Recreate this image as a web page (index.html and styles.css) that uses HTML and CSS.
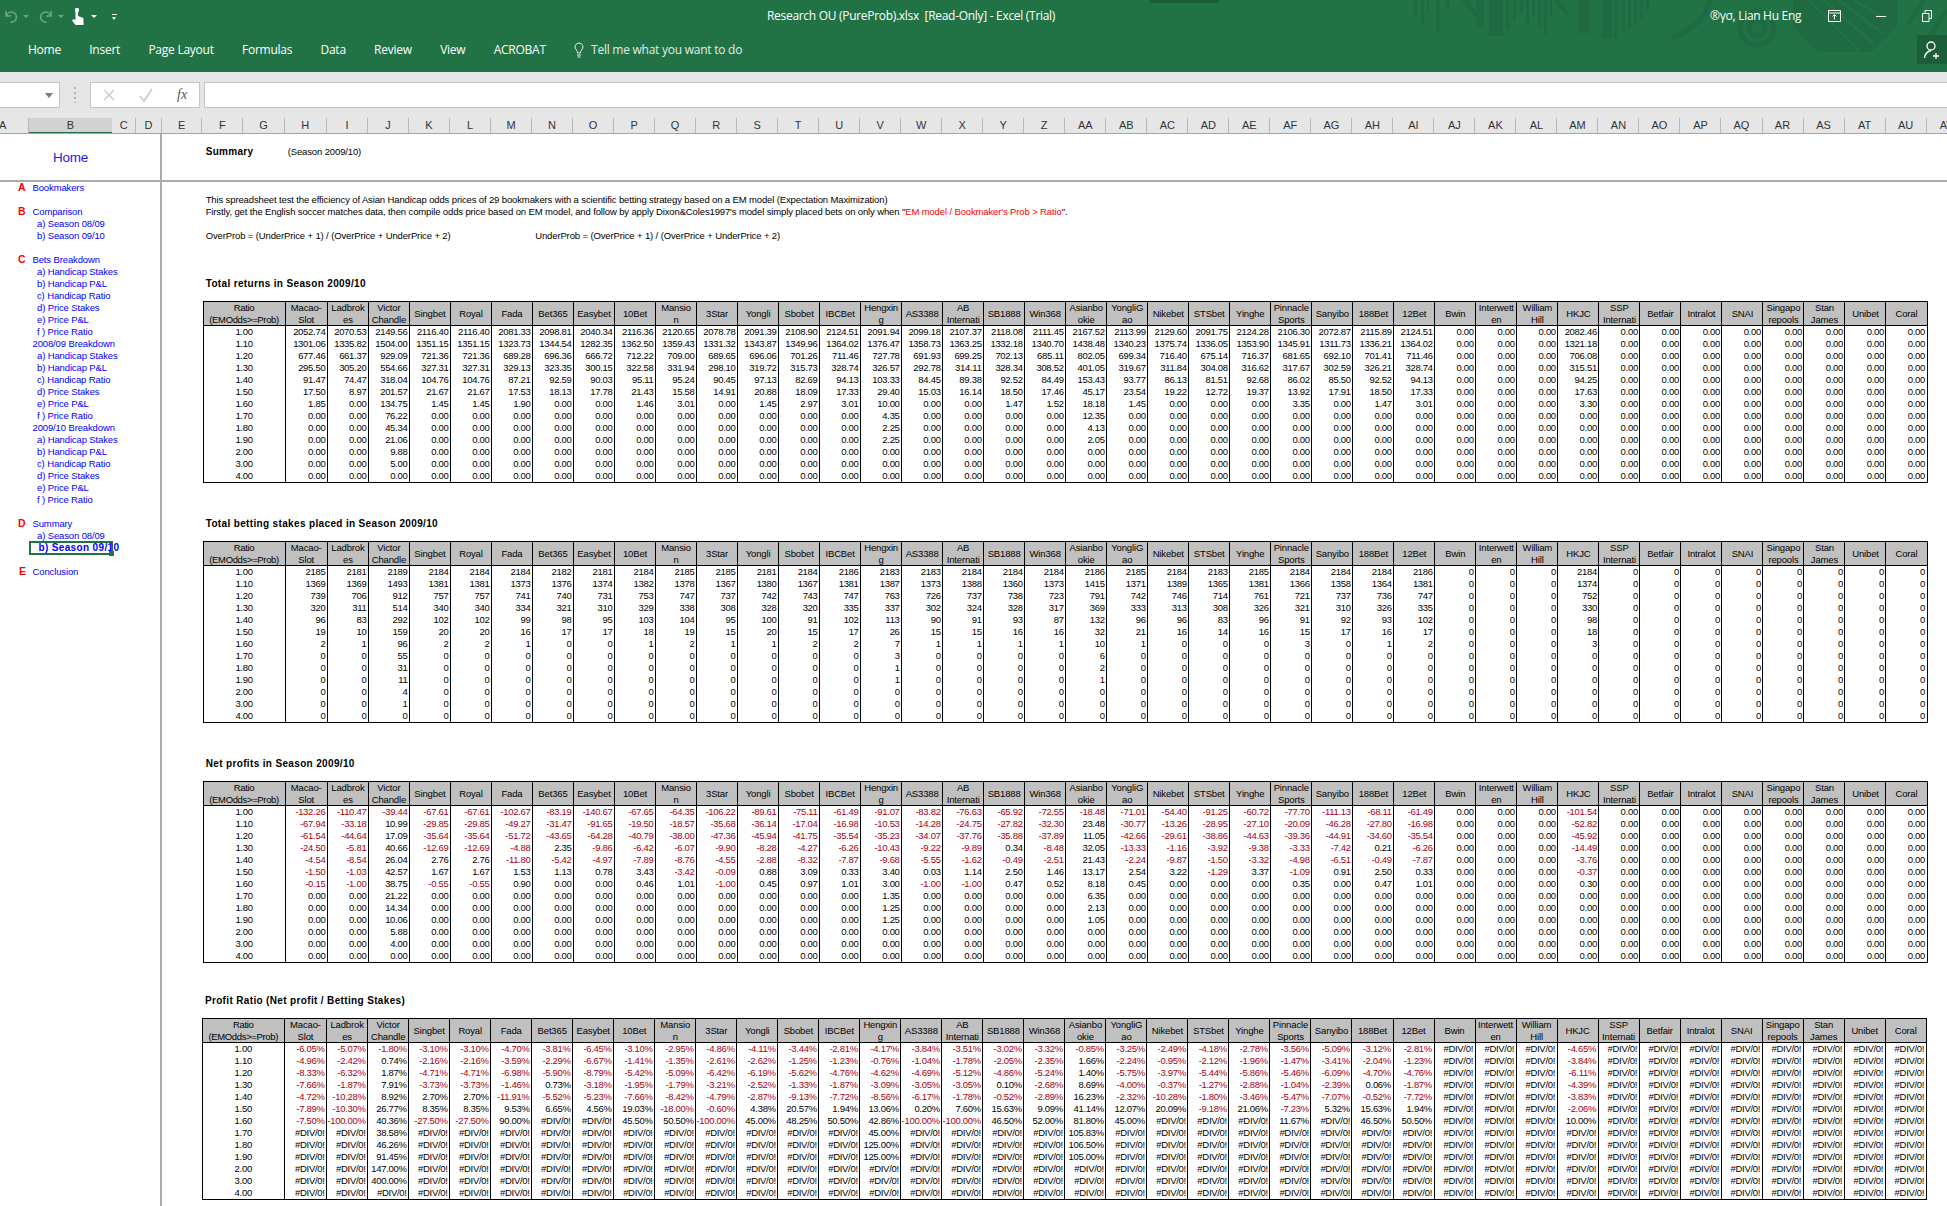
FILE: index.html
```html
<!DOCTYPE html>
<html lang="en">
<head>
<meta charset="utf-8">
<title>Research OU (PureProb).xlsx [Read-Only] - Excel (Trial)</title>
<link rel="stylesheet" href="styles.css">
</head>
<body>
<div class="app">
  <header class="chrome">
    <span class="title-tab"></span>
    <svg class="deco" viewBox="0 0 533 72" width="533" height="72" aria-hidden="true">
      <g class="deco-fill">
        <rect x="0" y="0" width="3" height="16"/><rect x="7" y="0" width="3" height="24"/><rect x="13" y="0" width="2" height="12"/><rect x="22" y="0" width="4" height="32"/>
        <rect x="32" y="0" width="3" height="10"/><rect x="62" y="0" width="8" height="28"/><rect x="75" y="0" width="14" height="36"/>
        <rect x="92" y="0" width="3" height="30"/><rect x="99" y="0" width="3" height="20"/><rect x="106" y="0" width="3" height="14"/><rect x="112" y="0" width="3" height="24"/>
        <rect x="118" y="0" width="3" height="16"/><rect x="124" y="0" width="3" height="26"/><rect x="130" y="0" width="3" height="34"/><rect x="136" y="0" width="2" height="18"/>
        <rect x="164" y="0" width="12" height="33"/><rect x="188" y="0" width="10" height="38"/><rect x="200" y="0" width="4" height="38"/><rect x="208" y="0" width="3" height="32"/>
        <rect x="214" y="0" width="3" height="28"/><rect x="220" y="0" width="3" height="24"/><rect x="226" y="0" width="3" height="18"/><rect x="232" y="0" width="3" height="12"/>
        <path d="M47 0 l15 18 v-6 l-8 -12z"/><path d="M140 0 l12 16 l3 -2 l-10 -14z"/>
        <path d="M379 0h104v26l-26 26h-52l-26-26z"/>
      </g>
      <g class="deco-cut">
        <path d="M395 0l50 50M410 0l50 44M425 0l44 34M440 0l30 18" />
      </g>
      <g class="deco-ring">
        <circle cx="343" cy="28" r="17"/><circle cx="343" cy="28" r="8"/>
        <path d="M296 0c-4 18-18 30-38 38"/>
        <path d="M510 0l-16 24M533 10l-20 30"/>
      </g>
    </svg>
    <div class="title-row">
      <div class="qat">
        <svg class="qat-icon faded" width="16" height="16" viewBox="0 0 16 16"><path d="M3 3v5h5M3.5 8a5 5 0 1 1 4 6" fill="none" stroke="#fff" stroke-width="1.6"/></svg>
        <span class="caret faded"></span>
        <svg class="qat-icon faded redo" width="16" height="16" viewBox="0 0 16 16"><path d="M13 3v5H8M12.5 8a5 5 0 1 0-4 6" fill="none" stroke="#fff" stroke-width="1.6"/></svg>
        <span class="caret faded"></span>
        <svg class="qat-icon hand" width="13" height="17" viewBox="0 0 13 17"><path d="M4 1a2.4 2.4 0 0 1 4 0v1.500a2.800 2.800 0 0 1-1 2V8l4 1.500c1 .4 1.500 1 1.500 2V17H4.500L1 12.500 2.500 11l2 1V4.500A2.800 2.800 0 0 1 4 2.500z" fill="#fff"/></svg>
        <span class="caret white"></span>
        <span class="customize"></span>
      </div>
      <div class="doc-title">Research OU (PureProb).xlsx&nbsp; [Read-Only] - Excel (Trial)</div>
      <div class="window">
        <span class="account">®γσ, Lian Hu Eng</span>
        <svg class="win-ribbon" width="13" height="12" viewBox="0 0 13 12"><path d="M.5.500h12v11H.500zM.5 3h12M6.500 9.500V5M4.500 6.500l2-2 2 2" fill="none" stroke="#fff"/></svg>
        <span class="win-min"></span>
        <svg class="win-max" width="10" height="12" viewBox="0 0 10 12"><path d="M.5 3.500h6.500v8H.500zM3 3.500V.5h6.500v8H7" fill="none" stroke="#fff"/></svg>
      </div>
    </div>
    <div class="tab-row">
      <nav class="tabs">
        <span>Home</span><span>Insert</span><span>Page Layout</span><span>Formulas</span><span>Data</span><span>Review</span><span>View</span><span>ACROBAT</span>
        <span class="tell">
          <svg width="10" height="16" viewBox="0 0 10 16"><path d="M5 1a4 4 0 0 0-2.500 7.100C3.300 9 3.500 10 3.500 11h3c0-1 .2-2 1-2.900A4 4 0 0 0 5 1zM3 13h4M3.500 15h3" fill="none" stroke="#e8f0ea"/></svg>
          Tell me what you want to do
        </span>
      </nav>
      <div class="share">
        <svg width="18" height="20" viewBox="0 0 18 20"><circle cx="8" cy="6" r="4" fill="none" stroke="#fff" stroke-width="1.300"/><path d="M1.500 18c.5-4 2.500-6.500 6.500-7.500M10 16h6M13 13v6" fill="none" stroke="#fff" stroke-width="1.300"/></svg>
      </div>
    </div>
  </header>

  <section class="formula-bar">
    <div class="name-box"><span class="name-caret"></span></div>
    <span class="grip"></span>
    <div class="fx-box">
      <svg width="12" height="12" viewBox="0 0 12 12"><path d="M1 1l10 10M11 1L1 11" stroke="#c8c8c8" stroke-width="1.300" fill="none"/></svg>
      <svg width="14" height="14" viewBox="0 0 14 14"><path d="M1 8l4 5L13 1" stroke="#c8c8c8" stroke-width="1.600" fill="none"/></svg>
      <span class="fx">fx</span>
    </div>
    <div class="formula-input"></div>
  </section>

  <div class="col-heads" id="colHeads"></div>

  <main class="sheet">
    <div class="home-cell"><a class="home-link">Home</a></div>
    <div class="page-head"><strong class="page-title">Summary</strong><span>(Season 2009/10)</span></div>

    <nav class="index">
      <div class="ix head"><b>A</b>Bookmakers</div>
      <div class="ix gap"></div>
      <div class="ix head"><b>B</b>Comparison</div>
      <div class="ix sub">a) Season 08/09</div>
      <div class="ix sub">b) Season 09/10</div>
      <div class="ix gap"></div>
      <div class="ix head"><b>C</b>Bets Breakdown</div>
      <div class="ix sub">a) Handicap Stakes</div>
      <div class="ix sub">b) Handicap P&amp;L</div>
      <div class="ix sub">c) Handicap Ratio</div>
      <div class="ix sub">d) Price Stakes</div>
      <div class="ix sub">e) Price P&amp;L</div>
      <div class="ix sub">f ) Price Ratio</div>
      <div class="ix group">2008/09 Breakdown</div>
      <div class="ix sub">a) Handicap Stakes</div>
      <div class="ix sub">b) Handicap P&amp;L</div>
      <div class="ix sub">c) Handicap Ratio</div>
      <div class="ix sub">d) Price Stakes</div>
      <div class="ix sub">e) Price P&amp;L</div>
      <div class="ix sub">f ) Price Ratio</div>
      <div class="ix group">2009/10 Breakdown</div>
      <div class="ix sub">a) Handicap Stakes</div>
      <div class="ix sub">b) Handicap P&amp;L</div>
      <div class="ix sub">c) Handicap Ratio</div>
      <div class="ix sub">d) Price Stakes</div>
      <div class="ix sub">e) Price P&amp;L</div>
      <div class="ix sub">f ) Price Ratio</div>
      <div class="ix gap"></div>
      <div class="ix head"><b>D</b>Summary</div>
      <div class="ix sub">a) Season 08/09</div>
      <div class="ix current">b) Season 09/10<i class="sel-box"></i><i class="sel-handle"></i></div>
      <div class="ix gap"></div>
      <div class="ix head"><b class="e">E</b>Conclusion</div>
    </nav>

    <div class="content">
      <div class="note first">This spreadsheet test the efficiency of Asian Handicap odds prices of 29 bookmakers with a scientific betting strategy based on a EM model (Expectation Maximization)</div>
      <div class="note">Firstly, get the English soccer matches data, then compile odds price based on EM model, and follow by apply Dixon&amp;Coles1997's model simply placed bets on only when "<span class="alert">EM model / Bookmaker's Prob &gt; Ratio</span>".</div>
      <div class="note formula"><span class="over">OverProb = (UnderPrice + 1) / (OverPrice + UnderPrice + 2)</span><span>UnderProb = (OverPrice + 1) / (OverPrice + UnderPrice + 2)</span></div>
      <section class="block b1"><h2>Total returns in Season 2009/10</h2><div class="grid" id="returns"></div></section>
      <section class="block"><h2>Total betting stakes placed in Season 2009/10</h2><div class="grid" id="stakes"></div></section>
      <section class="block"><h2>Net profits in Season 2009/10</h2><div class="grid" id="profits"></div></section>
      <section class="block last"><h2>Profit Ratio (Net profit / Betting Stakes)</h2><div class="grid" id="ratios"></div></section>
    </div>
  </main>
</div>
<script src="app.js"></script>
</body>
</html>
```
FILE: styles.css
```css
* { box-sizing: border-box; }
html, body { margin: 0; height: 100%; overflow: hidden; background: #fff; }
body { font-family: "Liberation Sans", Arial, sans-serif; color: #000; }
.app { width: 1947px; height: 1206px; display: flex; flex-direction: column; overflow: hidden; }

/* Window chrome */
.chrome { position: relative; height: 72px; background: #217346; color: #fff; font-family: "Open Sans", sans-serif; font-size: 12px; overflow: hidden; }
.title-tab { position: absolute; left: 1150px; top: 0; width: 69px; height: 3px; background: #1a5c38; }
.deco { position: absolute; left: 1414px; top: 0; }
.deco-fill { fill: #1f6a41; }
.deco-cut { fill: none; stroke: #217346; stroke-width: 3; }
.deco-ring { fill: none; stroke: #1f6a41; stroke-width: 5; }
.title-row { position: relative; height: 35px; display: flex; align-items: flex-start; padding-top: 7px; }
.qat { width: 767px; display: flex; align-items: center; height: 18px; padding-left: 3px; }
.qat-icon { flex: none; }
.faded { opacity: .35; }
.caret { width: 0; height: 0; border: 3px solid transparent; border-top: 3px solid #fff; border-bottom: 0; margin: 0 0 0 4px; }
.redo { margin-left: 9px; }
.hand { margin-left: 7px; }
.caret.white { margin-left: 7px; }
.customize { width: 5px; height: 5px; margin-left: 15px; border-top: 1px solid #fff; position: relative; }
.customize::after { content: ""; position: absolute; left: 0; top: 2px; border: 2.5px solid transparent; border-top: 3px solid #fff; border-bottom: 0; }
.doc-title { flex: 1; line-height: 18px; font-size: 12px; letter-spacing: -.3px; white-space: nowrap; }
.window { display: flex; align-items: center; height: 18px; }
.account { position: absolute; left: 1710px; top: 7px; line-height: 18px; letter-spacing: -.3px; white-space: nowrap; }
.win-ribbon { position: absolute; left: 1828px; top: 10px; }
.win-min { position: absolute; left: 1876px; top: 16px; width: 10px; height: 1px; background: #fff; }
.win-max { position: absolute; left: 1922px; top: 10px; }
.tab-row { position: relative; height: 37px; display: flex; justify-content: space-between; }
.tabs { display: flex; gap: 28.300px; padding-left: 28px; line-height: 30px; height: 30px; letter-spacing: -.25px; }
.tell { display: inline-flex; align-items: center; gap: 7px; color: #e2ece6; }
.share { width: 30px; height: 29px; background: #1b5e39; display: flex; align-items: center; justify-content: center; }

/* Formula bar */
.formula-bar { height: 46px; background: #e6e6e6; display: flex; align-items: flex-start; padding-top: 10px; }
.name-box { position: relative; width: 60px; height: 26px; background: #fff; border: 1px solid #c6c6c6; border-left: 0; }
.name-caret { position: absolute; left: 45px; top: 10px; border: 4px solid transparent; border-top: 5px solid #7a7a7a; border-bottom: 0; }
.grip { width: 2px; height: 16px; margin: 5px 14px 0 14px; background: repeating-linear-gradient(#b0b0b0 0 2px, transparent 2px 5px); }
.fx-box { width: 110px; height: 26px; background: #fff; border: 1px solid #c6c6c6; display: flex; align-items: center; padding-left: 12px; gap: 24px; }
.fx { font-family: "Liberation Serif", serif; font-style: italic; font-size: 14px; color: #555; }
.formula-input { flex: 1; height: 26px; margin-left: 4px; background: #fff; border: 1px solid #c6c6c6; border-right: 0; }

/* Column headers */
.col-heads { height: 16px; background: #e6e6e6; display: grid; grid-template-columns: 29px 83px 24.4px 25.400px 40.700px 41px 41.200px 42.300px repeat(40, 41.020px); border-bottom: 1px solid #a6a6a6; overflow: hidden; }
.col-heads span { font-size: 11px; line-height: 15px; text-align: center; color: #333; border-right: 1px solid #b8b8b8; overflow: hidden; white-space: nowrap; }
.col-heads .active { background: #d2d2d2; border-bottom: 2px solid #217346; height: 16px; border-right: 0; }
.col-heads .cut { text-align: left; text-indent: -1px; }

/* Sheet */
.sheet { flex: 1; min-height: 0; display: grid; grid-template-columns: 162px 1fr; grid-template-rows: 48px 1fr; font-size: 9.500px; letter-spacing: -.13px; }
.home-cell { border-right: 2px solid #ababab; border-bottom: 2px solid #ababab; padding: 15px 0 0 29px; width: 162px; }
.home-link { display: block; width: 83px; text-align: center; color: #2a12e6; font-size: 13.500px; letter-spacing: -.2px; line-height: 18px; }
.page-head { border-bottom: 2px solid #ababab; padding: 12px 0 0 43.700px; line-height: 12px; white-space: nowrap; }
.page-title { display: inline-block; width: 82px; font-size: 10px; letter-spacing: .3px; }
.index { border-right: 2px solid #ababab; color: #00f; }
.ix { height: 12px; line-height: 11px; white-space: nowrap; position: relative; }
.ix.head { padding-left: 18px; }
.ix.head b { display: inline-block; width: 14.500px; color: #f00; font-size: 10.500px; font-weight: 700; }
.ix.head b.e { padding-left: 1px; }
.ix.group { padding-left: 32.500px; }
.ix.sub { padding-left: 37px; }
.ix.current { padding-left: 38.500px; font-size: 10px; font-weight: 700; letter-spacing: .35px; }
.sel-box { position: absolute; left: 28.500px; top: -1px; width: 84px; height: 14px; border: 2px solid #217346; pointer-events: none; }
.sel-handle { position: absolute; left: 109px; top: 9px; width: 5px; height: 5px; background: #217346; }
.content { padding: 12px 0 0 40.500px; min-width: 0; overflow: hidden; }
.content .note { margin-left: 3.200px; height: 12px; line-height: 12px; white-space: nowrap; }
.note.formula { margin-top: 12px; display: flex; }
.note .over { width: 329.500px; }
.alert { color: #f00; }
.block { margin-top: 35px; }
.block.b1 { margin-top: 36px; }
.block.last { margin-top: 32px; margin-left: -.8px; }
h2 { margin: 0 0 11px 3.200px; height: 12px; line-height: 12px; font-size: 10px; font-weight: 700; letter-spacing: .35px; white-space: nowrap; }
.grid { width: max-content; height: 182px; display: grid; grid-template-columns: 81.100px 42.300px repeat(39, 41.020px); grid-template-rows: 24px; grid-auto-rows: 12px; border: 1px solid #000; }
.h, .c { border-left: 1px solid #000; overflow: hidden; white-space: nowrap; line-height: 12px; }
.h { background: #c0c0c0; border-bottom: 1px solid #000; display: flex; align-items: center; justify-content: center; text-align: center; white-space: pre-line; letter-spacing: -.15px; }
.h.first-col { letter-spacing: -.35px; }
.c { text-align: right; padding-right: 1.500px; letter-spacing: -.3px; }
.c.r { text-align: center; padding-right: 0; }
.first-col { border-left: 0; }
.neg { color: #a80010; }
```
FILE: app.js
```js
// Spreadsheet data: bookmaker name, total returns, stakes per ratio row.
// Net profit and profit ratio are computed from them, as the workbook does.
var ratios = ["1.00","1.10","1.20","1.30","1.40","1.50","1.60","1.70","1.80","1.90","2.00","3.00","4.00"];
var Z = [];
var books = [
["Macao-\nSlot",[2052.74,1301.06,677.46,295.50,91.47,17.50,1.85],[2185,1369,739,320,96,19,2]],
["Ladbrok\nes",[2070.53,1335.82,661.37,305.20,74.47,8.97],[2181,1369,706,311,83,10,1]],
["Victor\nChandle",[2149.56,1504.00,929.09,554.66,318.04,201.57,134.75,76.22,45.34,21.06,9.88,5.00],[2189,1493,912,514,292,159,96,55,31,11,4,1]],
["Singbet",[2116.40,1351.15,721.36,327.31,104.76,21.67,1.45],[2184,1381,757,340,102,20,2]],
["Royal",[2116.40,1351.15,721.36,327.31,104.76,21.67,1.45],[2184,1381,757,340,102,20,2]],
["Fada",[2081.33,1323.73,689.28,329.13,87.21,17.53,1.90],[2184,1373,741,334,99,16,1]],
["Bet365",[2098.81,1344.54,696.36,323.35,92.59,18.13],[2182,1376,740,321,98,17]],
["Easybet",[2040.34,1282.35,666.72,300.15,90.03,17.78],[2181,1374,731,310,95,17]],
["10Bet",[2116.36,1362.50,712.22,322.58,95.11,21.43,1.46],[2184,1382,753,329,103,18,1]],
["Mansio\nn",[2120.65,1359.43,709.00,331.94,95.24,15.58,3.01],[2185,1378,747,338,104,19,2]],
["3Star",[2078.78,1331.32,689.65,298.10,90.45,14.91],[2185,1367,737,308,95,15,1]],
["Yongli",[2091.39,1343.87,696.06,319.72,97.13,20.88,1.45],[2181,1380,742,328,100,20,1]],
["Sbobet",[2108.90,1349.96,701.26,315.73,82.69,18.09,2.97],[2184,1367,743,320,91,15,2]],
["IBCBet",[2124.51,1364.02,711.46,328.74,94.13,17.33,3.01],[2186,1381,747,335,102,17,2]],
["Hengxin\ng",[2091.94,1376.47,727.78,326.57,103.33,29.40,10.00,4.35,2.25,2.25],[2183,1387,763,337,113,26,7,3,1,1]],
["AS3388",[2099.18,1358.73,691.93,292.78,84.45,15.03],[2183,1373,726,302,90,15,1]],
["AB\nInternati",[2107.37,1363.25,699.25,314.11,89.38,16.14],[2184,1388,737,324,91,15,1]],
["SB1888",[2118.08,1332.18,702.13,328.34,92.52,18.50,1.47],[2184,1360,738,328,93,16,1]],
["Win368",[2111.45,1340.70,685.11,308.52,84.49,17.46,1.52],[2184,1373,723,317,87,16,1]],
["Asianbo\nokie",[2167.52,1438.48,802.05,401.05,153.43,45.17,18.18,12.35,4.13,2.05],[2186,1415,791,369,132,32,10,6,2,1]],
["YongliG\nao",[2113.99,1340.23,699.34,319.67,93.77,23.54,1.45],[2185,1371,742,333,96,21,1]],
["Nikebet",[2129.60,1375.74,716.40,311.84,86.13,19.22],[2184,1389,746,313,96,16]],
["STSbet",[2091.75,1336.05,675.14,304.08,81.51,12.72],[2183,1365,714,308,83,14]],
["Yinghe",[2124.28,1353.90,716.37,316.62,92.68,19.37],[2185,1381,761,326,96,16]],
["Pinnacle\nSports",[2106.30,1345.91,681.65,317.67,86.02,13.92,3.35],[2184,1366,721,321,91,15,3]],
["Sanyibo",[2072.87,1311.73,692.10,302.59,85.50,17.91],[2184,1358,737,310,92,17]],
["188Bet",[2115.89,1336.21,701.41,326.21,92.52,18.50,1.47],[2184,1364,736,326,93,16,1]],
["12Bet",[2124.51,1364.02,711.46,328.74,94.13,17.33,3.01],[2186,1381,747,335,102,17,2]],
["Bwin",Z,Z],
["Interwett\nen",Z,Z],
["William\nHill",Z,Z],
["HKJC",[2082.46,1321.18,706.08,315.51,94.25,17.63,3.30],[2184,1374,752,330,98,18,3]],
["SSP\nInternati",Z,Z],
["Betfair",Z,Z],
["Intralot",Z,Z],
["SNAI",Z,Z],
["Singapo\nrepools",Z,Z],
["Stan\nJames",Z,Z],
["Unibet",Z,Z],
["Coral",Z,Z]
];

// The workbook holds unrounded figures; these cells round one cent lower than
// the displayed returns and whole stakes would suggest (row index -> book indexes).
var centLower = {
  0: [3,4,7,8,12,14],
  1: [2,6,11,15,25,26],
  2: [1,6,8,10,12,14,16,17,21,24,25,26],
  3: [1,5,7,9,25],
  4: [0,1,5,6,11,12,14,17,20,22,25,26,31],
  5: [22,24]
};
var pctExact = {
  "3:1":-1.87,"4:3":2.70,"4:4":2.70,
  "5:5":9.53,"5:7":4.56,"5:8":19.03,"5:11":4.38,"5:12":20.57,"5:14":13.06,"5:18":9.09,
  "5:19":41.14,"5:20":12.07,"5:21":20.09,"5:22":-9.18,"5:24":-7.23,"5:25":5.32,
  "6:8":45.5,"6:12":48.25,"6:17":46.5,"6:26":46.5
};

function cell(cls, text) {
  var d = document.createElement("div");
  d.className = cls;
  d.textContent = text;
  return d;
}

function fill(id, render) {
  var root = document.getElementById(id);
  root.appendChild(cell("h first-col", "Ratio\n(EMOdds>=Prob)"));
  books.forEach(function (b) { root.appendChild(cell("h", b[0])); });
  ratios.forEach(function (label, i) {
    root.appendChild(cell("c r first-col", label));
    books.forEach(function (b, k) {
      var ret = b[1][i] || 0, st = b[2][i] || 0;
      var v = render(ret, st, i, k);
      root.appendChild(cell(v.neg ? "c neg" : "c", v.text));
    });
  });
}

fill("returns", function (r) { return { text: r.toFixed(2) }; });
fill("stakes", function (r, s) { return { text: String(s) }; });
fill("profits", function (r, s, i, k) {
  var fix = centLower[i] && centLower[i].indexOf(k) >= 0 ? 0.01 : 0;
  var n = r - s - fix;
  return { text: n.toFixed(2), neg: n < -0.001 };
});
fill("ratios", function (r, s, i, k) {
  if (!s) return { text: "#DIV/0!" };
  var exact = pctExact[i + ":" + k];
  var p = exact !== undefined ? exact : (r - s) / s * 100;
  return { text: p.toFixed(2) + "%", neg: p < 0 };
});

var heads = document.getElementById("colHeads");
var names = "ABCDEFGHIJKLMNOPQRSTUVWXYZ".split("");
"ABCDEFGHIJKLMNOPQRSTUV".split("").forEach(function (l) { names.push("A" + l); });
names.forEach(function (n) {
  var s = document.createElement("span");
  s.className = n === "B" ? "active" : (n === "A" ? "cut" : "");
  s.textContent = n;
  heads.appendChild(s);
});
```
